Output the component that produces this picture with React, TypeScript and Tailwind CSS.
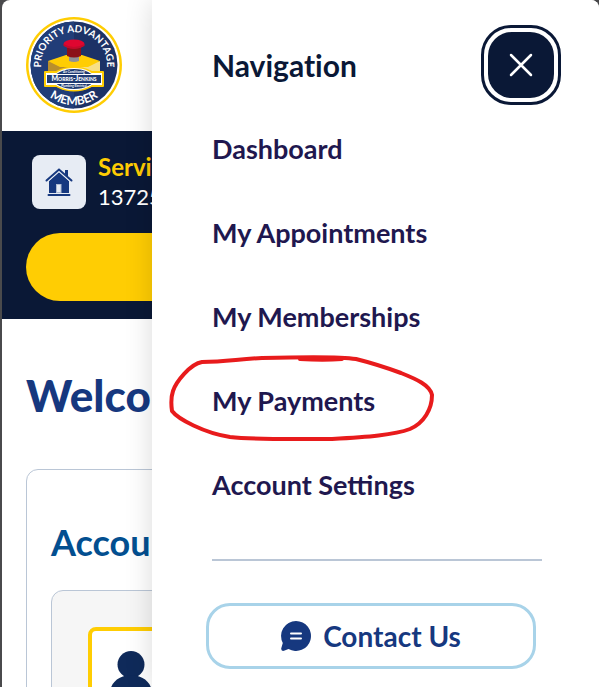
import { useState } from "react"

const links = ["Dashboard", "My Appointments", "My Memberships", "My Payments", "Account Settings"]

const MemberBadge = () => {
    return <svg viewBox="0 0 96 96" className="size-24" role="img" aria-label="Priority Advantage Member">
        <defs>
            <path id="badge-top" d="M15.500 54 A33 33 0 1 1 80.500 54" />
            <path id="badge-bottom" d="M8 48 A40 40 0 0 0 88 48" />
        </defs>
        <circle cx="48" cy="48" r="48" fill="#ffcd03" />
        <circle cx="48" cy="48" r="45.500" fill="#fff" />
        <circle cx="48" cy="48" r="43.500" fill="#1c3266" />
        <path d="M48 4.500 A43.500 43.500 0 0 0 48 91.500 Z" fill="#213d78" />
        <path d="M22 44 L48 50 V66 H22 Z" fill="#b98f2c" />
        <path d="M48 50 L74 44 V66 H48 Z" fill="#f7df86" />
        <path d="M22 44 L40 38 H56 L74 44 L62 50 H34 Z" fill="#ffcd03" />
        <path d="M43 38 H53 V44 Q48 46 43 44 Z" fill="#8e9096" />
        <path d="M41 29 H55 V39 Q48 42 41 39 Z" fill="#8b1118" />
        <ellipse cx="48" cy="27" rx="10.500" ry="4.500" fill="#df0630" />
        <path d="M37.500 27 V29 Q48 35 58.500 29 V27 Q48 33 37.500 27 Z" fill="#c40a2b" />
        <g fill="#ffcd03">
            <ellipse cx="48" cy="62" rx="23" ry="12.500" />
            <rect x="18" y="54" width="60" height="16" rx="1" />
        </g>
        <g fill="#fff">
            <ellipse cx="48" cy="62" rx="21" ry="11" />
            <rect x="20" y="56" width="56" height="12" />
        </g>
        <ellipse cx="48" cy="62" rx="20" ry="10" fill="#203b73" />
        <rect x="20" y="57" width="56" height="10" fill="#fff" />
        <rect x="21" y="58" width="54" height="8" fill="#203b73" />
        <g fill="#fff" textAnchor="middle" fontFamily="Lato, sans-serif" fontWeight="700">
            <text x="48" y="64" fontSize="7" fontWeight="900" style={{ fontVariant: "small-caps" }}>Morris-Jenkins</text>
            <text x="48" y="56" fontSize="3">Air Conditioning</text>
            <text x="48" y="70" fontSize="3">Plumbing Electrical</text>
            <text fontSize="10"><textPath href="#badge-top" startOffset="50%">PRIORITY ADVANTAGE</textPath></text>
            <text fontSize="12"><textPath href="#badge-bottom" startOffset="50%">MEMBER</textPath></text>
        </g>
        <circle cx="86" cy="48" r="1" fill="none" stroke="#fff" strokeWidth="0.400" />
    </svg>
}

const HouseIcon = () => {
    return <svg viewBox="0 0 28 28" className="size-7" aria-hidden="true">
        <path d="M4 13 L14 4 L24 13 V25 H4 Z" fill="#16387f" />
        <path d="M1.500 13 L14 2 L26.500 13" fill="none" stroke="#e7ecf4" strokeWidth="3.500" />
        <path d="M1.500 12.500 L14 1.500 L26.500 12.500" fill="none" stroke="#16387f" strokeWidth="2" strokeLinecap="round" />
        <path d="M20 2 H23 V9 L20 6 Z" fill="#16387f" />
        <rect x="11.500" y="16.500" width="4.500" height="8" fill="#e7ecf4" stroke="#aebbd2" strokeWidth="1" />
        <rect x="2.500" y="26" width="23" height="2" rx="1" fill="#16387f" />
    </svg>
}

const ChatIcon = () => {
    return <svg viewBox="0 0 30 30" className="size-[30px]" aria-hidden="true">
        <path d="M15 0 A15 15 0 1 1 7.500 28 L3 29.800 Q0 30.500 .2 27.500 L1.800 22 A15 15 0 0 1 15 0 Z" fill="#16387f" />
        <path d="M10 12.500 H20 M10 17.500 H20" stroke="#fff" strokeWidth="2" strokeLinecap="round" />
    </svg>
}

const Marker = () => {
    return <svg viewBox="0 0 268 90" fill="none" stroke="#e81b1c" strokeWidth="4" strokeLinecap="round" strokeLinejoin="round" className="pointer-events-none absolute -left-11 -top-7 h-[90px] w-[268px] max-w-none" aria-hidden="true">
        <path d="M132 6 C150 7 160 7 174 6" />
        <path d="M188 6 C176 4 130 4 94 5 C70 6 58 9 34 9 C22 11 8 29 5 38 C3 44 3 51 4 58 C10 66 36 80 62 84 C88 87 130 86 164 86 C200 84 226 82 242 76 C256 70 264 56 264 42 C262 32 248 26 233 20 C214 13 200 9 188 6" />
    </svg>
}

const AccountPage = () => {
    return <div className="h-full min-w-[597px] overflow-hidden rounded-t-lg bg-white">
        <header className="px-6 pb-[18px] pt-[17px]">
            <MemberBadge />
        </header>
        <section className="bg-[#0a1836] px-6 pb-[18px] pt-[21px]">
            <div className="flex items-center gap-3 pl-[6px]">
                <div className="flex size-[54px] items-center justify-center rounded-lg bg-[#e7ecf4]">
                    <HouseIcon />
                </div>
                <div>
                    <div className="text-2xl/[30px] font-bold text-[#ffcd03]">Service</div>
                    <div className="text-[22px]/[30px] text-white">13725</div>
                </div>
            </div>
            <button type="button" aria-label="Schedule service" className="mt-[21px] block h-[68px] w-full rounded-full bg-[#ffcd03]"></button>
        </section>
        <main className="px-6 pt-12">
            <h1 className="text-[44px] font-black leading-[56px] text-[#16387f]">Welcome</h1>
            <section className="mt-[46px] rounded-xl border border-[#bac6d6] px-6 pt-12">
                <h2 className="text-[36px] font-bold leading-[48px] text-[#034f90]">Account</h2>
                <div className="mt-6 rounded-xl border border-[#bac6d6] bg-[#f6f6f6] p-9">
                    <div className="h-40 w-40 rounded-lg border-4 border-[#ffcd03] bg-white pl-[18px] pt-5">
                        <svg viewBox="0 0 42 48" className="h-12 w-[42px]" fill="#0f2a5a" aria-hidden="true">
                            <circle cx="21" cy="13.500" r="13.500" />
                            <path d="M0 40 C2 29 12 24 21 24 C30 24 40 29 42 40 V48 H0 Z" />
                        </svg>
                    </div>
                </div>
            </section>
        </main>
    </div>
}

export default function App() {
    const [open, setOpen] = useState(true);
    return <div className="relative h-screen overflow-hidden bg-[#4a4a4c] pl-[2px] font-[Lato,sans-serif]">
        <AccountPage />
        {open && <aside className="absolute inset-y-0 left-[152px] right-0 overflow-hidden rounded-tr-lg bg-white shadow-[0_0_28px_rgba(0,0,0,0.15)]">
            <div className="flex items-center justify-between pl-[60px] pr-[38px] pt-[25px]">
                <h2 className="text-[30px] font-bold text-[#0a1836] [font-variant-ligatures:none]">Navigation</h2>
                <button type="button" aria-label="Close navigation" onClick={() => setOpen(false)} className="flex size-20 items-center justify-center rounded-[30px] border-3 border-[#0a1836] bg-white p-1">
                    <span className="flex size-full items-center justify-center rounded-[24px] bg-[#0a1836]">
                        <svg viewBox="0 0 24 24" className="size-6" stroke="#fff" strokeWidth="2.500" strokeLinecap="round" aria-hidden="true">
                            <path d="M2 2 L22 22 M22 2 L2 22" />
                        </svg>
                    </span>
                </button>
            </div>
            <nav className="pl-[60px] pr-[57px] pt-6">
                <ul className="flex flex-col gap-11">
                    {links.map((link) => <li key={link} className="relative">
                        <a href="#" className="block text-[27px] font-bold leading-10 text-[#1f184f]">{link}</a>
                        {link === "My Payments" && <Marker />}
                    </li>)}
                </ul>
            </nav>
            <hr className="ml-[60px] mr-[57px] mt-[54px] border-t-2 border-[#bac6d6]" />
            <div className="pl-[54px] pr-[63px] pt-[42px]">
                <button type="button" className="flex h-[66px] w-full items-center justify-center gap-3 rounded-3xl border-3 border-[#a8d3e9] text-[28px] font-bold text-[#16387f]">
                    <ChatIcon />
                    Contact Us
                </button>
            </div>
        </aside>}
    </div>
}
